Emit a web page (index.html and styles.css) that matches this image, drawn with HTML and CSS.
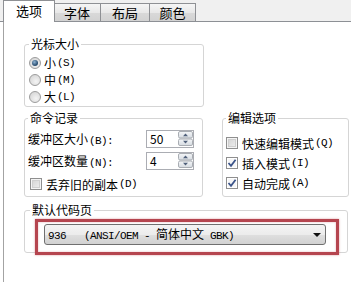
FILE: index.html
```html
<!DOCTYPE html>
<html>
<head>
<meta charset="utf-8">
<link rel="stylesheet" href="styles.css">
</head>
<body>
<div class="tabs">
  <div class="tab sel">选项</div>
  <div class="tab t2">字体</div>
  <div class="tab t3">布局</div>
  <div class="tab t4">颜色</div>
</div>
<div class="page">
  <fieldset class="grp g-cursor">
    <legend>光标大小</legend>
    <div class="opt"><span class="radio on"></span>小<span class="hk">(S)</span></div>
    <div class="opt"><span class="radio"></span>中<span class="hk">(M)</span></div>
    <div class="opt"><span class="radio"></span>大<span class="hk">(L)</span></div>
  </fieldset>
  <div class="row">
    <fieldset class="grp g-cmd">
      <legend>命令记录</legend>
      <div class="field">
        <span class="lbl">缓冲区大小<span class="hk">(B):</span></span>
        <div class="num"><span class="numval">50</span>
          <svg class="spin" width="15" height="15" viewBox="0 0 15 15"><defs><linearGradient id="sg" x1="0" y1="0" x2="0" y2="1"><stop offset="0" stop-color="#f4f6f8"/><stop offset="1" stop-color="#d6dbe1"/></linearGradient></defs><rect x="0.5" y="0.5" width="14" height="6.5" rx="1.5" fill="url(#sg)" stroke="#a9adb3"/><rect x="0.5" y="8" width="14" height="6.5" rx="1.5" fill="url(#sg)" stroke="#a9adb3"/><path d="M5 5.2 L7.5 2.4 L10 5.2 Z" fill="#4f5f7a"/><path d="M5 9.8 L7.5 12.6 L10 9.8 Z" fill="#4f5f7a"/></svg>
        </div>
      </div>
      <div class="field">
        <span class="lbl">缓冲区数量<span class="hk">(N):</span></span>
        <div class="num"><span class="numval">4</span>
          <svg class="spin" width="15" height="15" viewBox="0 0 15 15"><rect x="0.5" y="0.5" width="14" height="6.5" rx="1.5" fill="url(#sg)" stroke="#a9adb3"/><rect x="0.5" y="8" width="14" height="6.5" rx="1.5" fill="url(#sg)" stroke="#a9adb3"/><path d="M5 5.2 L7.5 2.4 L10 5.2 Z" fill="#4f5f7a"/><path d="M5 9.8 L7.5 12.6 L10 9.8 Z" fill="#4f5f7a"/></svg>
        </div>
      </div>
      <div class="chk-row discard"><span class="chk"></span>丢弃旧的副本<span class="hk">(D)</span></div>
    </fieldset>
    <fieldset class="grp g-edit">
      <legend>编辑选项</legend>
      <div class="chk-row"><span class="chk"></span>快速编辑模式<span class="hk">(Q)</span></div>
      <div class="chk-row"><span class="chk on"><svg width="10" height="10" viewBox="0 0 10 10"><path d="M1.5 5 L4 7.8 L8.6 1.8" fill="none" stroke="#3b5489" stroke-width="1.8"/></svg></span>插入模式<span class="hk">(I)</span></div>
      <div class="chk-row"><span class="chk on"><svg width="10" height="10" viewBox="0 0 10 10"><path d="M1.5 5 L4 7.8 L8.6 1.8" fill="none" stroke="#3b5489" stroke-width="1.8"/></svg></span>自动完成<span class="hk">(A)</span></div>
    </fieldset>
  </div>
  <fieldset class="grp g-code">
    <legend>默认代码页</legend>
    <div class="mark">
      <div class="select">
        <span class="val">936   (ANSI/OEM - <span class="zh">简体中文</span> GBK)</span>
        <span class="caret"></span>
      </div>
    </div>
  </fieldset>
</div>
</body>
</html>
```
FILE: styles.css
```css
html, body {
  margin: 0;
  padding: 0;
}
body {
  width: 351px;
  height: 282px;
  overflow: hidden;
  background: #ffffff;
  font-family: "Noto Sans CJK SC", sans-serif;
  font-size: 12px;
  color: #000;
}
.hk {
  font-family: "Liberation Mono", monospace;
  font-size: 11px;
  letter-spacing: -0.6px;
  margin-left: 1px;
}
.tabs {
  display: flex;
  align-items: flex-end;
  height: 21px;
  padding-left: 3px;
  background: #f0f0f0;
  border-bottom: 1px solid #8d9095;
}
.tab {
  box-sizing: border-box;
  height: 18px;
  border: 1px solid #8e9094;
  border-bottom: none;
  background: linear-gradient(#f5f5f5, #e8e8e8 50%, #d9d9d9 51%, #d2d2d2);
  font-size: 13px;
  line-height: 16px;
  padding-top: 1px;
  text-align: center;
}
.tab.sel {
  position: relative;
  z-index: 1;
  width: 52px;
  height: 22px;
  margin-bottom: -1px;
  background: #ffffff;
  line-height: 20px;
  padding-top: 0;
}
.t2 { width: 48px; margin-left: -2px; }
.t3 { width: 50px; margin-left: -1px; }
.t4 { width: 47px; margin-left: -1px; }

.page {
  box-sizing: border-box;
  height: 260px;
  margin-left: 3px;
  border-left: 1px solid #a3a3a3;
  padding: 15px 0 0 20px;
}
.grp {
  box-sizing: border-box;
  margin: 0;
  min-width: 0;
  border: 1px solid #d5d5d5;
  border-radius: 3px;
}
.grp legend {
  padding: 0 2px;
  line-height: 14px;
  font-size: 12px;
}
.g-cursor {
  width: 180px;
  padding: 3px 4px 1px 4px;
}
.opt {
  display: flex;
  align-items: center;
  height: 17px;
}
.radio {
  box-sizing: border-box;
  width: 12px;
  height: 12px;
  margin-right: 3px;
  border: 1px solid #9c9c9c;
  border-radius: 50%;
  background: radial-gradient(circle at 60% 65%, #f4f4f4 0, #dedede 60%, #cfcfcf 100%);
  display: flex;
  align-items: center;
  justify-content: center;
}
.radio.on::after {
  content: "";
  width: 6px;
  height: 6px;
  border-radius: 50%;
  background: radial-gradient(circle at 40% 35%, #8fb3d3 0, #2e5376 60%, #1f3a55 100%);
}
.row {
  display: flex;
  margin-top: 4px;
}
.g-cmd {
  width: 179px;
  padding: 4px 8px 3px 3px;
}
.field {
  display: flex;
  align-items: center;
  height: 19px;
  margin-bottom: 3px;
}
.lbl {
  flex: 1;
}
.num {
  box-sizing: border-box;
  width: 48px;
  height: 18px;
  border: 1px solid #abadb3;
  display: flex;
  align-items: center;
}
.numval {
  flex: 1;
  padding-left: 3px;
  line-height: 16px;
}
.spin {
  display: block;
}
.chk-row {
  display: flex;
  align-items: center;
  height: 20px;
}
.discard {
  height: 14px;
  margin-top: 7px;
  padding-left: 2px;
}
.chk {
  box-sizing: border-box;
  width: 12px;
  height: 12px;
  margin-right: 4px;
  border: 1px solid #8f8f8f;
  box-shadow: inset 0 0 0 1px #f4f4f4, inset 0 0 0 2px #cfcfcf;
  background-image: linear-gradient(135deg, #d0d0d0, #f2f2f2);
  display: flex;
  align-items: center;
  justify-content: center;
}
.chk.on {
  background: #f6f6f6;
  box-shadow: inset 0 0 0 1px #fff;
}
.chk svg {
  display: block;
}
.g-edit {
  flex: 1;
  margin-left: 19px;
  margin-right: 2px;
  padding: 8px 4px 3px 3px;
}
.g-code {
  width: 324px;
  margin-top: 6px;
  padding: 2px 9px 0 10px;
}
.g-code legend {
  margin-left: -5px;
}
.mark {
  box-sizing: border-box;
  width: 304px;
  border: 3px solid #b5454f;
  box-shadow: 0 0 2px rgba(200, 90, 100, 0.6), inset 0 0 2px rgba(200, 90, 100, 0.5);
  padding: 2px 0 7px 6px;
  margin-bottom: -3px;
}
.select {
  box-sizing: border-box;
  width: 282px;
  height: 21px;
  border: 1px solid #707070;
  border-radius: 3px;
  background: linear-gradient(#f4f4f4, #ececec 50%, #dfdfdf 51%, #d2d2d2);
  display: flex;
  align-items: center;
  padding: 0 4px 0 3px;
}
.val {
  flex: 1;
  white-space: pre;
  font-family: "Liberation Mono", "Noto Sans CJK SC", monospace;
  font-size: 11px;
  letter-spacing: -0.6px;
  line-height: 19px;
}
.zh {
  font-family: "Noto Sans CJK SC", sans-serif;
  font-size: 12px;
  letter-spacing: 0;
}
.caret {
  width: 0;
  height: 0;
  border-left: 4px solid transparent;
  border-right: 4px solid transparent;
  border-top: 4px solid #111;
}
```
